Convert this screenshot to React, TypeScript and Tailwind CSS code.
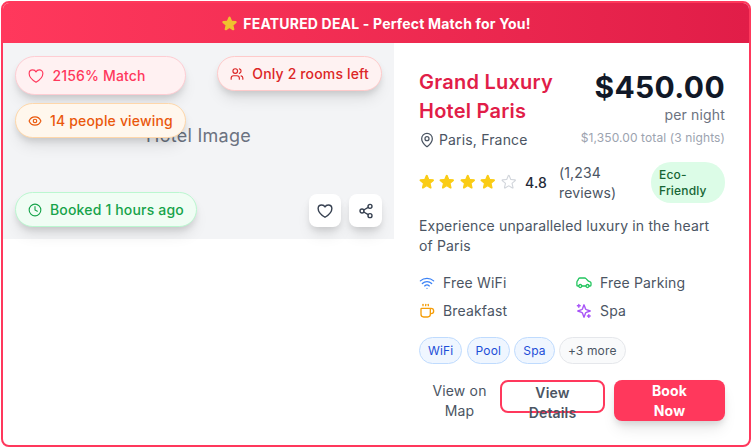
import React from "react";
import { Users, Eye, Clock, Share2, MapPin, Wifi, Coffee } from "lucide-react";

const STAR =
  "M11.48 3.5a.56.56 0 0 1 1.04 0l2.13 5.1c.08.2.27.33.47.35l5.52.44c.5.04.7.66.32.99l-4.2 3.6a.56.56 0 0 0-.19.56l1.29 5.38a.56.56 0 0 1-.84.61l-4.73-2.88a.56.56 0 0 0-.58 0l-4.73 2.88a.56.56 0 0 1-.84-.61l1.29-5.38a.56.56 0 0 0-.19-.56l-4.2-3.6a.56.56 0 0 1 .32-.99l5.52-.44a.56.56 0 0 0 .47-.35z";

function Star({ filled }: { filled: boolean }) {
  return (
    <svg viewBox="0 0 24 24" className="size-[17.5px] shrink-0" fill={filled ? "#facc15" : "none"} stroke={filled ? "#facc15" : "#d1d5db"} strokeWidth={1.5}>
      <path d={STAR} />
    </svg>
  );
}

function Heart({ className, strokeWidth }: { className: string; strokeWidth: number }) {
  return (
    <svg viewBox="0 0 24 24" className={className} fill="none" stroke="currentColor" strokeWidth={strokeWidth} strokeLinecap="round" strokeLinejoin="round">
      <path d="M22.3 8.2C22.3 5.2 20 2.9 16.9 2.9 14.7 2.9 12.8 4.1 12 5.9 11.2 4.1 9.3 2.9 7.1 2.9 4 2.9 1.7 5.2 1.7 8.2 1.7 15.1 12 21.4 12 21.4S22.3 15.1 22.3 8.2Z" />
    </svg>
  );
}

function Car() {
  return (
    <svg viewBox="0 0 16 12" className="h-3 w-4" fill="none" stroke="#22c55e" strokeWidth={1.3} strokeLinecap="round" strokeLinejoin="round">
      <path d="M2.5 9H1.7Q.9 9 .9 8V5.2Q.9 4.3 1.7 3.6L2.6 1.8Q3 1 4 1H8.6Q9.4 1 10 1.6L12.5 4.2L14.2 4.8Q15 5.1 15 6V8Q15 9 14.2 9H13.1M9.9 9H5.9" />
      <circle cx="4.3" cy="9" r="1.5" />
      <circle cx="11.5" cy="9" r="1.5" />
    </svg>
  );
}

function Sparkles() {
  return (
    <svg viewBox="0 0 16 16" className="size-4" fill="none" stroke="#a855f7" strokeWidth={1.4} strokeLinecap="round" strokeLinejoin="round">
      <path d="M8 1.8 9.4 5.6Q9.7 6.3 10.4 6.6L14.2 8 10.4 9.4Q9.7 9.7 9.4 10.4L8 14.2 6.6 10.4Q6.3 9.7 5.6 9.4L1.8 8 5.6 6.6Q6.3 6.3 6.6 5.6ZM2.8 1.4V4.2M1.4 2.8H4.2M12.8 11.6V14.4M11.4 13H14.2" />
    </svg>
  );
}

const pill = "flex items-center rounded-full border text-sm font-medium shadow-[0_4px_6px_-1px_rgba(0,0,0,0.1),0_10px_15px_-3px_rgba(0,0,0,0.1)]";
const action = "flex h-[33px] items-center justify-center rounded-lg bg-white text-[#374151] shadow-[0_4px_6px_-1px_rgba(0,0,0,0.1),0_10px_15px_-3px_rgba(0,0,0,0.1)]";
const tag = "flex h-[27px] items-center rounded-full border border-[#bfdbfe] bg-[#eff6ff] px-2 text-xs text-[#1d4ed8]";

export default function App() {
  return (
    <div className="h-[448px] w-[752px] overflow-hidden bg-white p-px font-['Inter',sans-serif] tracking-[0.01em]">
      <div className="flex h-[446px] flex-col overflow-hidden rounded-lg border-2 border-[#ff385c] bg-white">
        <div className="flex h-10 shrink-0 items-center justify-center bg-linear-to-r from-[#ff385c] to-[#e11d48] pt-px text-sm font-bold text-white">
          <svg viewBox="0 0 24 24" className="mr-[5px] size-[17px]" fill="#efc12f" stroke="#efc12f" strokeWidth={2}>
            <path d={STAR} />
          </svg>
          <span className="tracking-[0.013em]">FEATURED DEAL - Perfect Match for You!</span>
        </div>
        <div className="flex flex-1">
          <div className="relative flex h-[196px] w-[391px] shrink-0 items-center justify-center bg-[#f3f4f6] text-lg text-[#6b7280]">
            <span className="translate-y-[-5px] tracking-[0.015em]">Hotel Image</span>
            <div className="absolute top-[13px] left-3 flex flex-col gap-2">
              <div className={`${pill} h-[39px] border-[#fecdd3] bg-[#fff1f2] px-3 text-[#ff385c]`}>
                <Heart className="mr-2 size-4" strokeWidth={1.7} /><span className="ml-[0.5px]">2156% Match</span>
              </div>
              <div className={`${pill} h-[35px] border-[#fed7aa] bg-[#fff7ed] px-3 text-[#ea580c]`}>
                <Eye className="mr-2 size-[14px]" strokeWidth={2} /><span className="tracking-[0.012em]">14 people viewing</span>
              </div>
            </div>
            <div className={`${pill} absolute top-[13px] right-3 h-[35px] border-[#fecaca] bg-[#fef2f2] px-3 text-[#dc2626]`}>
              <Users className="mr-2 size-[14px]" strokeWidth={2} />Only 2 rooms left
            </div>
            <div className={`${pill} absolute bottom-3 left-3 h-[35px] border-[#bbf7d0] bg-[#f0fdf4] px-3 text-[#16a34a]`}>
              <Clock className="mr-2 size-[14px]" strokeWidth={1.9} /><span className="tracking-[0.012em]">Booked 1 hours ago</span>
            </div>
            <div className="absolute right-3 bottom-3 flex gap-2">
              <button className={`${action} w-8`}><Heart className="size-4" strokeWidth={2.1} /></button>
              <button className={`${action} w-[33px]`}><Share2 className="size-4" strokeWidth={2.1} /></button>
            </div>
          </div>

          <div className="flex min-w-0 flex-1 flex-col pt-6 pr-6 pl-[25px]">
            <div className="flex h-[83px] justify-between">
              <div>
                <h2 className="w-[140px] pt-px text-xl leading-[29px] font-semibold tracking-[0.012em] text-[#e11d48]">Grand Luxury Hotel Paris</h2>
                <div className="mt-1 flex items-center gap-1 text-sm text-[#4b5563]"><MapPin className="size-4" strokeWidth={1.9} />Paris, France</div>
              </div>
              <div className="text-right whitespace-nowrap">
                <div className="text-[30px] leading-10 font-bold tracking-[0.012em] text-[#111827]">$450.00</div>
                <div className="text-sm leading-4 text-[#6b7280]">per night</div>
                <div className="mt-[7px] text-xs leading-4 tracking-[0.009em] text-[#9ca3af]">$1,350.00 total (3 nights)</div>
              </div>
            </div>
            <div className="mt-3 flex h-[41px] items-center">
              <div className="-ml-px flex gap-[2.9px] pb-px">{[0, 1, 2, 3, 4].map((i) => <Star key={i} filled={i < 4} />)}</div>
              <span className="ml-[8px] text-sm font-medium text-[#1f2937]">4.8</span>
              <span className="ml-3 w-[60px] text-sm leading-5 text-[#4b5563]">(1,234 reviews)</span>
              <span className="ml-auto w-[74px] rounded-[20px] bg-[#dcfce7] px-2 pt-[5px] pb-1 text-xs leading-4 font-medium text-[#166534]">Eco-<br />Friendly</span>
            </div>
            <p className="mt-[13px] text-sm leading-5 text-[#4b5563]">Experience unparalleled luxury in the heart<br />of Paris</p>
            <div className="mt-[17px] grid grid-cols-2 gap-x-2 gap-y-2 text-sm leading-5 text-[#4b5563]">
              <div className="flex items-center gap-2"><Wifi className="size-4 text-[#3b82f6]" strokeWidth={1.9} />Free WiFi</div>
              <div className="flex items-center gap-2"><Car />Free Parking</div>
              <div className="flex items-center gap-2"><Coffee className="size-4 text-[#f59e0b]" strokeWidth={2} />Breakfast</div>
              <div className="flex items-center gap-2"><Sparkles />Spa</div>
            </div>
            <div className="mt-4 flex gap-[4.2px]">
              <span className={tag}>WiFi</span>
              <span className={tag}>Pool</span>
              <span className={tag}>Spa</span>
              <span className="flex h-[27px] items-center rounded-full border border-[#e5e7eb] bg-[#f9fafb] px-2 text-xs text-[#4b5563]">+3 more</span>
            </div>
            <div className="mt-4 flex items-start text-center text-sm leading-5">
              <button className="w-[81px] px-3 py-px text-[#4b5563]">View on Map</button>
              <button className="mr-[9px] h-[33px] w-[105px] rounded-lg border-2 border-[#ff385c] px-6 pt-px font-semibold text-[#4b5563]"><span className="block h-[29px]">View Details</span></button>
              <button className="h-[41px] w-[111px] rounded-lg bg-[#ff385c] px-8 font-bold text-white shadow-[0_4px_6px_-1px_rgba(0,0,0,0.1),0_10px_15px_-3px_rgba(0,0,0,0.1)]">Book Now</button>
            </div>
          </div>
        </div>
      </div>
    </div>
  );
}
